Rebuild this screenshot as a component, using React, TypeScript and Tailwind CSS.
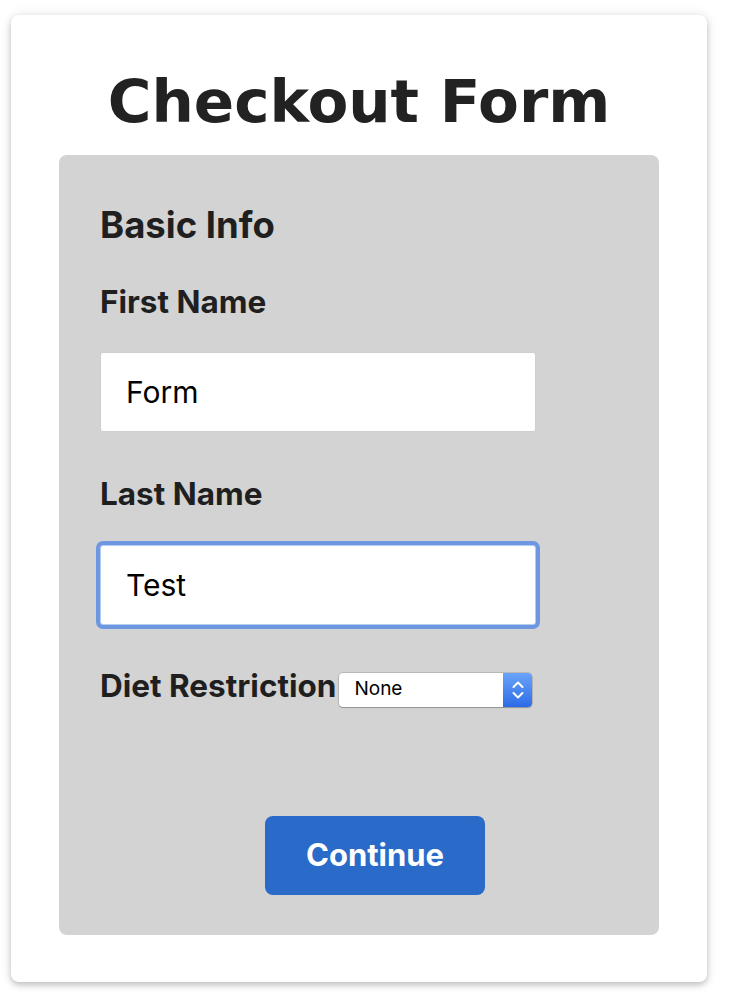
import { useState } from "react";

const App = () => {
  const [firstName, setFirstName] = useState("Form");
  const [lastName, setLastName] = useState("Test");
  const [diet, setDiet] = useState("None");

  return (
    <div className="min-h-screen bg-white pl-[11px] pt-[15px]">
      {/* ==== Card ==== */}
      <div className="flex h-[967px] w-[696px] flex-col items-center rounded-[8px] bg-white pt-[57px] shadow-[0_3px_6px_rgba(0,0,0,0.22),0_0_14px_rgba(0,0,0,0.08)]">
        <h1 className="font-['DejaVu_Sans',sans-serif] text-[59.5px] leading-none font-bold text-[#222222]">
          Checkout Form
        </h1>

        {/* ==== Panel ==== */}
        <form className="mt-[23.5px] flex w-[600px] flex-col rounded-[8px] bg-[#d3d3d3] pt-[52px] pr-[9px] pb-[40px] pl-[41px] font-['Inter',sans-serif] text-[#1f1f1f]">
          <h2 className="text-[36.5px] leading-none font-bold">Basic Info</h2>

          <label
            className="mt-[42px] text-[31.5px] leading-none font-bold"
            htmlFor="first"
          >
            First Name
          </label>
          <input
            id="first"
            className="mt-[35px] h-[80px] w-[436px] rounded-[3px] border border-[#cfcfcf] bg-white pl-[25px] text-[30px] text-black outline-none"
            type="text"
            value={firstName}
            onChange={(e) => setFirstName(e.target.value)}
          />

          <label
            className="mt-[46px] text-[31.5px] leading-none font-bold"
            htmlFor="last"
          >
            Last Name
          </label>
          <input
            id="last"
            className="mt-[35px] h-[80px] w-[436px] rounded-[3px] border border-[#b4cbf2] bg-white pl-[25px] text-[30px] text-black shadow-[0_0_0_4px_#6e97e2] outline-none"
            type="text"
            value={lastName}
            onChange={(e) => setLastName(e.target.value)}
          />

          {/* ==== Diet ==== */}
          <div className="mt-[45px] flex items-start">
            <label
              className="text-[31.5px] leading-none font-bold"
              htmlFor="diet"
            >
              Diet Restriction
            </label>
            <div className="relative mt-[3px] ml-[3px] flex h-[34px] w-[193px] rounded-[4px] bg-white shadow-[0_0_0_0.5px_rgba(0,0,0,0.25),0_1px_1px_rgba(0,0,0,0.2)]">
              <select
                id="diet"
                className="h-full flex-1 appearance-none bg-transparent pl-[15px] text-[19px] text-black outline-none"
                value={diet}
                onChange={(e) => setDiet(e.target.value)}
              >
                <option>None</option>
                <option>Vegetarian</option>
                <option>Vegan</option>
                <option>Gluten Free</option>
              </select>
              <div className="pointer-events-none flex w-[29px] items-center justify-center rounded-r-[4px] bg-gradient-to-b from-[#6ba3f8] to-[#2c6be7]">
                <svg width="14" height="24" viewBox="0 0 14 24" fill="none">
                  <path
                    d="M2.5 9 L7 4.5 L11.5 9"
                    stroke="white"
                    strokeWidth="2"
                    strokeLinecap="round"
                    strokeLinejoin="round"
                  />
                  <path
                    d="M2.5 15 L7 19.5 L11.5 15"
                    stroke="white"
                    strokeWidth="2"
                    strokeLinecap="round"
                    strokeLinejoin="round"
                  />
                </svg>
              </div>
            </div>
          </div>

          {/* ==== Button ==== */}
          <button
            className="mt-[109px] h-[79px] w-[220px] self-center rounded-[8px] bg-[#2a6bc9] text-[31px] font-bold text-white"
            type="button"
          >
            Continue
          </button>
        </form>
      </div>
    </div>
  );
};

export default App;
